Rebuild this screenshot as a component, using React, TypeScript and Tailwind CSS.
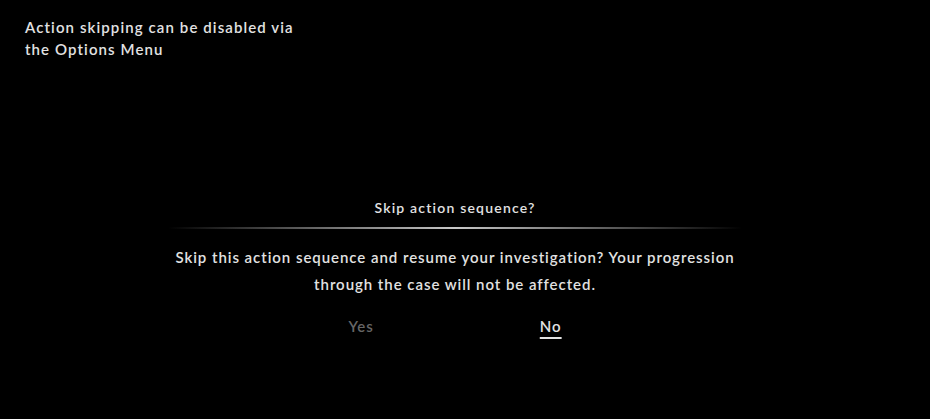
export default function App() {
  return (
    <div
      className="w-[930px] h-[419px] bg-black text-[#e2e2e2] flex flex-col overflow-hidden"
      style={{ fontFamily: "Lato, 'Noto Sans', sans-serif" }}
    >
      {/* hint in the corner */}
      <div className="pl-[25px] pt-[16px] text-[15px] leading-[22px] font-semibold tracking-[1.1px]">
        <p>Action skipping can be disabled via</p>
        <p>the Options Menu</p>
      </div>

      {/* skip prompt */}
      <div className="mt-[138px] pr-[20px] flex flex-col items-center">
        <h2 className="text-[14px] leading-[20px] font-semibold tracking-[1.2px]">Skip action sequence?</h2>
        <div className="mt-[9px] w-[574px] h-[2px] bg-gradient-to-r from-transparent via-[#c8c8c8] to-transparent" />
        <p className="mt-[15px] text-[15px] leading-[27px] font-semibold tracking-[0.95px] text-center">
          Skip this action sequence and resume your investigation? Your progression
          <br />
          through the case will not be affected.
        </p>
        <div className="mt-[17px] flex gap-[166px] text-[15px] font-semibold tracking-[1px]">
          <button className="text-[#666666]">Yes</button>
          <button className="underline underline-offset-[5px] decoration-2">No</button>
        </div>
      </div>
    </div>
  );
}
